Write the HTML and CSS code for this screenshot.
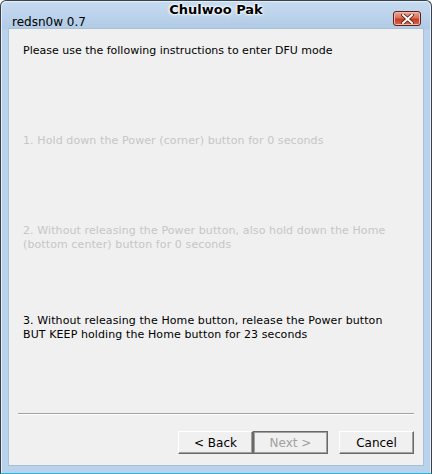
FILE: index.html
```html
<!DOCTYPE html>
<html lang="en">

<head>
    <meta charset="UTF-8">
    <title>redsn0w 0.7</title>
    <link rel="stylesheet" href="styles.css">
</head>

<body>
    <div class="window">
        <div class="titlebar">
            <span class="app-name">redsn0w 0.7</span>
            <span class="title">Chulwoo Pak</span>
            <button class="close">
                <svg width="13" height="10" viewBox="0 0 13 10">
                    <path d="M2 1 L11 9 M11 1 L2 9" stroke="#5a1d12" stroke-width="3.6" stroke-linecap="square"/>
                    <path d="M2 1 L11 9 M11 1 L2 9" stroke="#ffffff" stroke-width="2" stroke-linecap="square"/>
                </svg>
            </button>
        </div>

        <div class="client">
            <p class="intro">Please use the following instructions to enter DFU mode</p>

            <p class="step step1 done">1. Hold down the Power (corner) button for 0 seconds</p>
            <p class="step step2 done">2. Without releasing the Power button, also hold down the Home<br>(bottom center) button for 0 seconds</p>
            <p class="step step3">3. Without releasing the Home button, release the Power button<br>BUT KEEP holding the Home button for 23 seconds</p>

            <div class="footer">
                <hr class="separator">
                <div class="buttons">
                    <button class="btn">&lt; Back</button>
                    <button class="btn disabled">Next &gt;</button>
                    <button class="btn cancel">Cancel</button>
                </div>
            </div>
        </div>
    </div>
</body>

</html>
```

FILE: styles.css
```css
html, body {
    margin: 0;
    padding: 0;
    background-color: #ffffff;
}

body {
    font-family: Tahoma, 'DejaVu Sans', sans-serif;
    font-size: 11px;
}

.window {
    box-sizing: border-box;
    width: 432px;
    height: 474px;
    display: flex;
    flex-direction: column;
    border: 1px solid #3b4148;
    border-bottom-color: #2fb5d8;
    border-radius: 6px 6px 0 0;
    background: linear-gradient(to bottom, #c6dbf0 0px, #b1cbe6 28px, #bad3ec 29px, #bad3ec 100%);
    box-shadow: inset 1px 1px 0 #e4eef8, inset -1px 0 0 #e4eef8;
}

.titlebar {
    height: 27px;
    display: flex;
    align-items: center;
    position: relative;
    padding: 0 10px 0 11px;
}

.app-name {
    font-size: 12px;
    color: #000000;
    margin-top: 14px;
}

.title {
    position: absolute;
    left: 0;
    right: 0;
    top: 1px;
    text-align: center;
    font-size: 13px;
    font-weight: bold;
    color: #000000;
    text-shadow: 0 0 3px #ffffff, 0 0 2px #ffffff, 0 0 1px #ffffff, 0 0 4px #ffffff;
    pointer-events: none;
}

.close {
    margin-left: auto;
    margin-top: 8px;
    width: 28px;
    height: 15px;
    padding: 0;
    display: flex;
    align-items: center;
    justify-content: center;
    border: 1px solid #5e1f16;
    border-radius: 3px;
    background: linear-gradient(to bottom, #e9a99a 0%, #d8705c 45%, #c43c22 55%, #d56a4e 100%);
    box-shadow: inset 0 0 0 1px #f0b8a8;
}

.client {
    flex: 1;
    margin: 0 7px 7px 7px;
    background-color: #f0f0f0;
    border: 1px solid #a9bfd6;
    display: flex;
    flex-direction: column;
    color: #000000;
}

.intro {
    margin: 15px 0 0 14px;
    line-height: 14px;
}

.step {
    margin: 0 0 0 14px;
    line-height: 14px;
    letter-spacing: 0.1px;
}

.step1 {
    margin-top: 76px;
}

.step2 {
    margin-top: 76px;
}

.step3 {
    margin-top: 62px;
}

.done {
    color: #c6c6c6;
}

.footer {
    margin-top: auto;
    padding: 0 9px 11px 9px;
}

.separator {
    margin: 0 0 16px 0;
    border: none;
    border-top: 1px solid #a0a0a0;
    border-bottom: 1px solid #ffffff;
}

.buttons {
    display: flex;
    justify-content: flex-end;
}

.btn {
    box-sizing: border-box;
    width: 75px;
    height: 23px;
    font-family: inherit;
    font-size: 12px;
    color: #000000;
    background-color: #f0f0f0;
    border: 1px solid;
    border-color: #ffffff #696969 #696969 #ffffff;
    box-shadow: inset -1px -1px 0 #a0a0a0;
    padding: 0;
}

.btn.disabled {
    color: #a0a0a0;
    border-color: #696969;
    box-shadow: inset 1px 1px 0 #a0a0a0, inset -1px -1px 0 #a0a0a0;
}

.btn.cancel {
    margin-left: 11px;
}
```
